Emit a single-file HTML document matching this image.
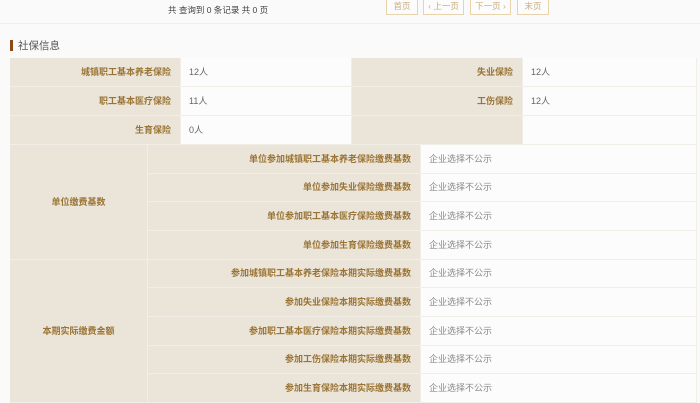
<!DOCTYPE html>
<html><head><meta charset="utf-8"><style>
*{margin:0;padding:0;box-sizing:border-box}
body{width:700px;height:400px;overflow:hidden;background:#fafafa;font-family:"Liberation Sans","Noto Sans CJK SC",sans-serif;position:relative}
.a{position:absolute}
.top{left:0;top:0;width:700px;height:24px;border-bottom:1px solid #eeeeee;background:#fafafa}
.info{left:168px;top:4px;font-size:8.5px;color:#444}
.btn{top:-2px;height:17px;border:1px solid #e8d3ac;font-size:8.5px;color:#c9ad80;text-align:center;line-height:15px;background:#fcfcfc}
.tt{left:18px;top:38px;font-size:10.5px;color:#555}
.bar{left:10px;top:40px;width:3px;height:11px;background:#8a4b14}
.c{position:absolute;font-size:9px;line-height:1;display:flex;align-items:center;border-right:1px solid #f1ede7;border-bottom:1px solid #f1ede7}
.l{background:#ebe4d9;color:#9a7434;font-weight:bold;justify-content:flex-end;padding-right:9px}
.v{background:#fcfcfc;color:#666;padding-left:8px}
.g{background:#fcfcfc;color:#888;padding-left:8px}
.m{background:#ebe4d9;color:#9a7434;font-weight:bold;justify-content:center}
</style></head><body>
<div class="a top"></div>
<div class="a info">共 查询到 0 条记录 共 0 页</div>
<div class="a btn" style="left:386px;width:32px">首页</div>
<div class="a btn" style="left:423px;width:41px">‹ 上一页</div>
<div class="a btn" style="left:470px;width:41px">下一页 ›</div>
<div class="a btn" style="left:517px;width:32px">末页</div>
<div class="a bar"></div>
<div class="a tt">社保信息</div>

<div class="c l" style="left:10px;top:58px;width:171px;height:29px">城镇职工基本养老保险</div>
<div class="c v" style="left:181px;top:58px;width:171px;height:29px">12人</div>
<div class="c l" style="left:352px;top:58px;width:171px;height:29px">失业保险</div>
<div class="c v" style="left:523px;top:58px;width:174px;height:29px">12人</div>
<div class="c l" style="left:10px;top:87px;width:171px;height:29px">职工基本医疗保险</div>
<div class="c v" style="left:181px;top:87px;width:171px;height:29px">11人</div>
<div class="c l" style="left:352px;top:87px;width:171px;height:29px">工伤保险</div>
<div class="c v" style="left:523px;top:87px;width:174px;height:29px">12人</div>
<div class="c l" style="left:10px;top:116px;width:171px;height:29px">生育保险</div>
<div class="c v" style="left:181px;top:116px;width:171px;height:29px">0人</div>
<div class="c l" style="left:352px;top:116px;width:171px;height:29px"></div>
<div class="c v" style="left:523px;top:116px;width:174px;height:29px"></div>

<div class="c m" style="left:10px;top:145px;width:138px;height:115px">单位缴费基数</div>
<div class="c l" style="left:148px;top:145px;width:273px;height:29px">单位参加城镇职工基本养老保险缴费基数</div>
<div class="c g" style="left:421px;top:145px;width:276px;height:29px">企业选择不公示</div>
<div class="c l" style="left:148px;top:174px;width:273px;height:28px">单位参加失业保险缴费基数</div>
<div class="c g" style="left:421px;top:174px;width:276px;height:28px">企业选择不公示</div>
<div class="c l" style="left:148px;top:202px;width:273px;height:29px">单位参加职工基本医疗保险缴费基数</div>
<div class="c g" style="left:421px;top:202px;width:276px;height:29px">企业选择不公示</div>
<div class="c l" style="left:148px;top:231px;width:273px;height:29px">单位参加生育保险缴费基数</div>
<div class="c g" style="left:421px;top:231px;width:276px;height:29px">企业选择不公示</div>

<div class="c m" style="left:10px;top:260px;width:138px;height:143px">本期实际缴费金额</div>
<div class="c l" style="left:148px;top:260px;width:273px;height:28px">参加城镇职工基本养老保险本期实际缴费基数</div>
<div class="c g" style="left:421px;top:260px;width:276px;height:28px">企业选择不公示</div>
<div class="c l" style="left:148px;top:288px;width:273px;height:29px">参加失业保险本期实际缴费基数</div>
<div class="c g" style="left:421px;top:288px;width:276px;height:29px">企业选择不公示</div>
<div class="c l" style="left:148px;top:317px;width:273px;height:29px">参加职工基本医疗保险本期实际缴费基数</div>
<div class="c g" style="left:421px;top:317px;width:276px;height:29px">企业选择不公示</div>
<div class="c l" style="left:148px;top:346px;width:273px;height:28px">参加工伤保险本期实际缴费基数</div>
<div class="c g" style="left:421px;top:346px;width:276px;height:28px">企业选择不公示</div>
<div class="c l" style="left:148px;top:374px;width:273px;height:29px">参加生育保险本期实际缴费基数</div>
<div class="c g" style="left:421px;top:374px;width:276px;height:29px">企业选择不公示</div>
</body></html>
